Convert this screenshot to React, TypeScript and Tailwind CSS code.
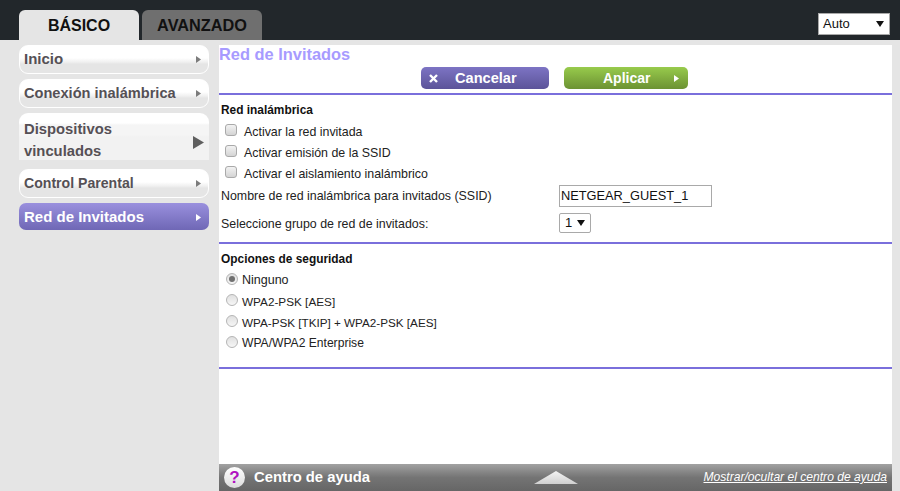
const font = { fontFamily: '"Liberation Sans", Arial, sans-serif' };

function Arrow({ color }: { color: string }) {
  return (
    <svg width="5" height="7" viewBox="0 0 5 7"><path d="M0 0 L5 3.5 L0 7 Z" fill={color} /></svg>
  );
}

function MenuItem({ label, size }: { label: string; size: string }) {
  return (
    <div className={`flex h-[29px] w-[190px] items-center justify-between rounded-[9px] border border-white bg-[linear-gradient(#ffffff_0,#ffffff_12px,#f0f0f0_16px,#e5e5e5_18px,#e5e5e5_100%)] pl-[4px] pr-[7px] font-bold text-[#555055] ${size}`}>
      <span>{label}</span>
      <Arrow color="#7c7c7c" />
    </div>
  );
}

function Check({ label }: { label: string }) {
  return (
    <div className="flex h-[21px] items-center pl-[6px]">
      <span className="mb-[4px] h-[12px] w-[12px] rounded-[3px] border border-[#a9a9a9] bg-gradient-to-b from-[#f2f2f2] to-[#d4d4d4]" />
      <span className="ml-[7px] pt-[2px] text-[12.4px]">{label}</span>
    </div>
  );
}

function Radio({ label, size, on = false }: { label: string; size: string; on?: boolean }) {
  return (
    <div className="flex h-[21px] items-center pl-[7px]">
      <span className="mb-[2px] flex h-[12px] w-[12px] items-center justify-center rounded-full border border-[#b5b5b5] bg-gradient-to-b from-[#e0e0e0] to-[#f6f6f6]">
        {on && <span className="h-[6px] w-[6px] rounded-full bg-[#707070]" />}
      </span>
      <span className={`ml-[4px] pt-[2px] ${size}`}>{label}</span>
    </div>
  );
}

function Caret() {
  return <svg width="8" height="6" viewBox="0 0 8 6"><path d="M0 0 H8 L4 6 Z" fill="#111" /></svg>;
}

export default function App() {
  return (
    <div className="flex h-[491px] w-[900px] flex-col overflow-hidden bg-[#e5e5e5]" style={font}>
      <header className="flex h-[40px] shrink-0 items-end justify-between bg-[#22272b] pl-[19px] pr-[10px]">
        <div className="flex gap-[3px]">
          <div className="flex h-[30px] w-[120px] items-center justify-center rounded-t-[6px] bg-[#e5e5e5] pt-[1px] text-[16px] font-bold text-[#111]">BÁSICO</div>
          <div className="flex h-[30px] w-[120px] items-center justify-center rounded-t-[6px] bg-[#6f6f6f] pt-[1px] text-[16.3px] font-bold text-[#111]">AVANZADO</div>
        </div>
        <div className="mb-[5px] flex h-[22px] w-[72px] items-center justify-between border border-[#a9a9a9] bg-white pl-[4px] pr-[5px] text-[13px] text-[#111]">
          <span>Auto</span>
          <Caret />
        </div>
      </header>

      <div className="flex min-h-0 flex-1">
        <nav className="flex w-[219px] shrink-0 flex-col gap-[5px] pl-[19px] pt-[5px]">
          <MenuItem label="Inicio" size="text-[15px]" />
          <MenuItem label="Conexión inalámbrica" size="text-[14.6px]" />
          <div className="mb-[4px] flex h-[47px] w-[190px] items-center justify-between rounded-t-[9px] bg-[linear-gradient(#ffffff_0,#ffffff_10px,#f5f5f5_12px,#f5f5f5_22px,#f2f2f2_24px,#f2f2f2_100%)] px-[5px] text-[14.8px] font-bold leading-[22px] text-[#555055]">
            <span className="mt-[6px]">Dispositivos<br />vinculados</span>
            <svg className="mt-[11px]" width="11" height="13" viewBox="0 0 11 13"><path d="M0 0 L11 6.5 L0 13 Z" fill="#5f5f5f" /></svg>
          </div>
          <MenuItem label="Control Parental" size="text-[14.1px]" />
          <div className="flex h-[27px] w-[190px] items-center justify-between rounded-[7px] bg-gradient-to-b from-[#9a90de] to-[#6f67b5] pl-[5px] pr-[8px] pt-[1px] text-[15px] font-bold text-white">
            <span>Red de Invitados</span>
            <Arrow color="#ffffff" />
          </div>
        </nav>

        <main className="mt-[5px] mr-[8px] flex min-w-0 flex-1 flex-col bg-white text-[12px] text-[#222]">
          <div className="h-[17px] text-[16.4px] font-bold leading-[18px] text-[#a79bff]">Red de Invitados</div>

          <div className="mt-[5px] flex h-[22px] gap-[15px] pl-[202px]">
            <div className="flex w-[128px] items-center rounded-[5px] bg-gradient-to-b from-[#7d74c4] to-[#5c5499] pl-[8px] pt-[1px] text-[14.6px] font-bold text-white">
              <svg width="9" height="9" viewBox="0 0 9 9"><path d="M1 1 L8 8 M8 1 L1 8" stroke="#fff" strokeWidth="2.4" /></svg>
              <span className="ml-[17px]">Cancelar</span>
            </div>
            <div className="flex w-[124px] items-center justify-between rounded-[5px] bg-gradient-to-b from-[#98cb4c] to-[#6c9233] pl-[39px] pr-[9px] pt-[1px] text-[14px] font-bold text-white">
              <span>Aplicar</span>
              <Arrow color="#ffffff" />
            </div>
          </div>

          <div className="mt-[4px] h-[2px] bg-[#7a6fdc]" />

          <div className="mt-[8px] pl-[2px] text-[11.9px] font-bold leading-[14px] text-[#111]">Red inalámbrica</div>
          <div className="mt-[4px]">
            <Check label="Activar la red invitada" />
            <Check label="Activar emisión de la SSID" />
            <Check label="Activar el aislamiento inalámbrico" />
          </div>
          <div className="flex h-[23px] items-center pl-[2px] text-[12.4px]">
            <span className="w-[338px] pt-[2px]">Nombre de red inalámbrica para invitados (SSID)</span>
            <span className="flex h-[22px] w-[153px] items-center border border-[#a9a9a9] pl-[1px] text-[12.8px] text-[#111]">NETGEAR_GUEST_1</span>
          </div>
          <div className="mt-[5px] flex h-[21px] items-center pl-[2px] text-[12.4px]">
            <span className="w-[338px] pt-[4px]">Seleccione grupo de red de invitados:</span>
            <span className="flex h-[20px] w-[32px] items-center justify-between rounded-[2px] border border-[#a9a9a9] px-[5px] text-[13px] text-[#111]">1<Caret /></span>
          </div>

          <div className="mt-[9px] h-[2px] bg-[#7a6fdc]" />

          <div className="mt-[8px] pl-[2px] text-[11.9px] font-bold leading-[14px] text-[#111]">Opciones de seguridad</div>
          <div className="mt-[3px]">
            <Radio label="Ninguno" size="text-[12.5px]" on />
            <Radio label="WPA2-PSK [AES]" size="text-[11.75px]" />
            <Radio label="WPA-PSK [TKIP] + WPA2-PSK [AES]" size="text-[11.7px]" />
            <Radio label="WPA/WPA2 Enterprise" size="text-[12.1px]" />
          </div>

          <div className="mt-[14px] h-[2px] bg-[#7a6fdc]" />

          <div className="flex-1" />

          <footer className="flex h-[27px] shrink-0 items-center bg-gradient-to-b from-[#a2a2a2] via-[#747474] to-[#666] px-[5px]">
            <div className="flex w-[310px] items-center">
              <span className="flex h-[21px] w-[21px] items-center justify-center rounded-full bg-gradient-to-b from-white to-[#dcdcdc] text-[17px] font-bold text-[#b010c0]">?</span>
              <span className="ml-[9px] text-[14.8px] font-bold text-white">Centro de ayuda</span>
            </div>
            <svg width="44" height="13" viewBox="0 0 44 13">
              <defs>
                <linearGradient id="tri" x1="0" y1="0" x2="0" y2="1">
                  <stop offset="0" stopColor="#f4f4f4" />
                  <stop offset="1" stopColor="#d0d0d0" />
                </linearGradient>
              </defs>
              <path d="M0 13 L22 0 L44 13 Z" fill="url(#tri)" />
            </svg>
            <a className="ml-auto text-[12.1px] italic text-white underline">Mostrar/ocultar el centro de ayuda</a>
          </footer>
        </main>
      </div>
    </div>
  );
}
